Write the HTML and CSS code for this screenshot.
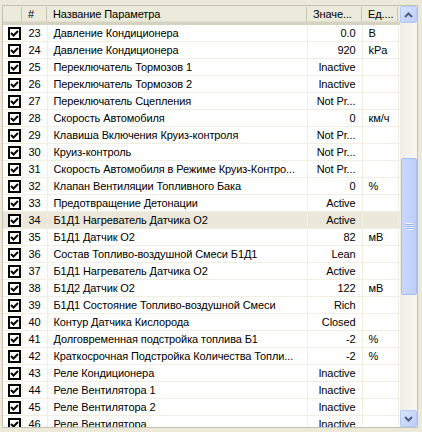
FILE: index.html
```html
<!DOCTYPE html>
<html lang="ru">
<head>
  <meta charset="UTF-8" />
  <title>Параметры</title>
  <link rel="stylesheet" href="styles.css">
</head>
<body>
  <div class="listview">
    <div class="lv-body">
      <table class="grid">
        <colgroup>
          <col class="c-chk"><col class="c-num"><col class="c-name"><col class="c-val"><col class="c-unit"><col class="c-fill">
        </colgroup>
        <thead>
          <tr><th></th><th>#</th><th>Название Параметра</th><th>Значе...</th><th>Ед....</th><th class="fill"></th></tr>
        </thead>
        <tbody id="rows"></tbody>
      </table>
    </div>
    <div class="scrollbar">
      <div class="sb-btn">
        <svg width="9" height="6" viewBox="0 0 9 6"><path d="M1 5 L4.5 1.5 L8 5" fill="none" stroke="#4d6185" stroke-width="2"/></svg>
      </div>
      <div class="sb-track">
        <div class="sb-thumb"><div class="grip"></div></div>
      </div>
      <div class="sb-btn">
        <svg width="9" height="6" viewBox="0 0 9 6"><path d="M1 1 L4.5 4.5 L8 1" fill="none" stroke="#4d6185" stroke-width="2"/></svg>
      </div>
    </div>
  </div>

  <script>
    const params = [
      [23, "Давление Кондиционера", "0.0", "В"],
      [24, "Давление Кондиционера", "920", "kPa"],
      [25, "Переключатель Тормозов 1", "Inactive", ""],
      [26, "Переключатель Тормозов 2", "Inactive", ""],
      [27, "Переключатель Сцепления", "Not Pr...", ""],
      [28, "Скорость Автомобиля", "0", "км/ч"],
      [29, "Клавиша Включения Круиз-контроля", "Not Pr...", ""],
      [30, "Круиз-контроль", "Not Pr...", ""],
      [31, "Скорость Автомобиля в Режиме Круиз-Контро...", "Not Pr...", ""],
      [32, "Клапан Вентиляции Топливного Бака", "0", "%"],
      [33, "Предотвращение Детонации", "Active", ""],
      [34, "Б1Д1 Нагреватель Датчика O2", "Active", ""],
      [35, "Б1Д1 Датчик O2", "82", "мВ"],
      [36, "Состав Топливо-воздушной Смеси Б1Д1", "Lean", ""],
      [37, "Б1Д1 Нагреватель Датчика O2", "Active", ""],
      [38, "Б1Д2 Датчик O2", "122", "мВ"],
      [39, "Б1Д1 Состояние Топливо-воздушной Смеси", "Rich", ""],
      [40, "Контур Датчика Кислорода", "Closed", ""],
      [41, "Долговременная подстройка топлива Б1", "-2", "%"],
      [42, "Краткосрочная Подстройка Количества Топли...", "-2", "%"],
      [43, "Реле Кондиционера", "Inactive", ""],
      [44, "Реле Вентилятора 1", "Inactive", ""],
      [45, "Реле Вентилятора 2", "Inactive", ""],
      [46, "Реле Вентилятора", "Inactive", ""]
    ];
    const selected = 34;
    const tbody = document.getElementById("rows");
    const check = '<span class="chk"><svg width="9" height="9" viewBox="0 0 9 9"><path d="M1 4 L3.5 6.5 L8 2" fill="none" stroke="#000" stroke-width="2"/></svg></span>';

    for (const [num, name, val, unit] of params) {
      const tr = document.createElement("tr");
      if (num === selected) tr.className = "sel";
      tr.innerHTML = `<td class="cell-chk">${check}</td><td>${num}</td><td>${name}</td><td class="val">${val}</td><td>${unit}</td><td></td>`;
      tbody.appendChild(tr);
    }
  </script>
</body>
</html>
```

FILE: styles.css
```css
body {
  margin: 0;
  background: #ece9d8;
  font-family: 'Liberation Sans', Arial, sans-serif;
  font-size: 11px;
  letter-spacing: -0.1px;
  color: #000;
}
.listview {
  display: flex;
  width: 414px;
  height: 421px;
  margin: 5px 2px 0 2px;
  border: 1px solid #c3c1b5;
  background: #fff;
  overflow: hidden;
}
.lv-body {
  width: 397px;
  overflow: hidden;
}
.grid {
  border-collapse: collapse;
  table-layout: fixed;
  width: 397px;
}
.c-chk { width: 19px; }
.c-num { width: 25px; }
.c-name { width: 260px; }
.c-val { width: 55px; }
.c-unit { width: 36px; }
.c-fill { width: 2px; }

.grid th {
  height: 16px;
  padding: 0 0 0 6px;
  background: #ebeadb;
  border-bottom: 3px solid #d6d2c2;
  box-shadow: inset 0 -1px 0 #e2decd;
  font-weight: normal;
  text-align: left;
  white-space: nowrap;
  overflow: hidden;
  background-image: linear-gradient(#c7c5b2, #c7c5b2);
  background-size: 1px 14px;
  background-position: right 1px;
  background-repeat: no-repeat;
}
.grid th.fill {
  padding: 0;
  background-image: none;
}
.grid td {
  height: 16px;
  padding: 0 0 0 6px;
  border-bottom: 1px solid #f1efe2;
  border-right: 1px solid #f1efe2;
  white-space: nowrap;
  overflow: hidden;
  line-height: 16px;
}
.grid td.cell-chk {
  padding: 0 0 0 5px;
}
.grid td.val {
  text-align: right;
  padding: 0 6px 0 0;
}
.grid tr.sel td {
  background: #ebe8db;
}
.chk {
  display: block;
  width: 9px;
  height: 9px;
  border: 2px solid #000;
  background: #fff;
}
.chk svg {
  display: block;
}

.scrollbar {
  width: 17px;
  display: flex;
  flex-direction: column;
  background: linear-gradient(to right, #eeede5, #f8f7f3);
}
.sb-btn {
  height: 15px;
  border: 1px solid #b5c9f5;
  border-radius: 2px;
  background: linear-gradient(to bottom right, #d8e3fd, #bccdf8);
  display: flex;
  align-items: center;
  justify-content: center;
}
.sb-track {
  flex: 1;
  position: relative;
}
.sb-thumb {
  position: absolute;
  left: 1px;
  right: 0;
  top: 135px;
  height: 135px;
  border: 1px solid #a9bff0;
  border-radius: 2px;
  background: linear-gradient(to right, #c9d8fd, #bccefa);
  display: flex;
  align-items: center;
  justify-content: center;
}
.grip {
  width: 7px;
  height: 7px;
  background: repeating-linear-gradient(#eef3fe 0 1px, #8fb0f2 1px 2px);
}
```
